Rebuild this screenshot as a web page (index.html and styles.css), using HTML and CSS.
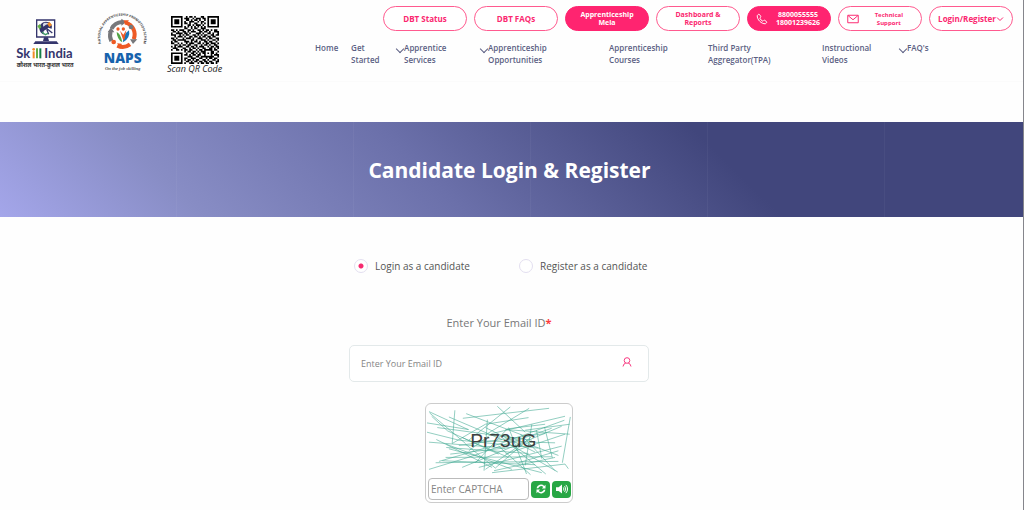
FILE: index.html
```html
<!DOCTYPE html>
<html lang="en">
<head>
<meta charset="utf-8">
<meta name="viewport" content="width=device-width, initial-scale=1">
<title>Candidate Login &amp; Register</title>
<link rel="stylesheet" href="styles.css">
</head>
<body>
<header class="header">
  <div class="logos">
    <svg class="logo-skill" viewBox="0 0 180 153" role="img" aria-label="Skill India">
      <path d="M62 6h54v51H62z" fill="none" stroke="#34356c" stroke-width="4"/>
      <path d="M84 58h12l3 11h-18z" fill="#34356c"/>
      <path d="M58 70h64l6 8H52z" fill="#34356c"/>
      <path d="M84 12a20 20 0 0 0-9 32l8 6q-4-12 6-15l8-6 10 3q3-8-2-14-8-9-21-6z" fill="#34356c"/>
      <path d="M84 14q-6 5-2 12l8-6q6 0 8-5z" fill="#d8dbe8"/>
      <path d="M64 24l8-6 4 10-6 6z" fill="#63ad45"/>
      <path d="M94 18l6-7 8 10-8 6z" fill="#f28c28"/>
      <path d="M91 31l18 14M92 34l6 15" stroke="#34356c" stroke-width="4"/>
      <path d="M78 42l10 8 8-4" stroke="#3d9a64" stroke-width="4" fill="none"/>
      <text class="skill-name" x="1" y="121">Sk</text>
      <path d="M50 100h6v21h-6z" fill="#f28c28"/><circle cx="53" cy="94" r="4" fill="#f28c28"/>
      <path d="M60 91h6v30h-6z" fill="#63ad45"/><path d="M70 91h6v30h-6z" fill="#16804a"/>
      <text class="skill-name" x="85" y="121">India</text>
      <text class="skill-tag" x="2" y="147">कौशल भारत-कुशल भारत</text>
    </svg>
    <svg class="logo-naps" viewBox="0 0 156 192" role="img" aria-label="National Apprenticeship Promotion Scheme">
      <defs><path id="ring" d="M15 110A66 66 0 1 1 142 110"/></defs>
      <text class="ring-text"><textPath href="#ring">NATIONAL APPRENTICESHIP PROMOTION SCHEME</textPath></text>
      <g fill="none" stroke-width="12">
        <path d="M47 65a37 37 0 0 1 31-20" stroke="#77787b"/>
        <path d="M89 47a37 37 0 0 1 24 50" stroke="#ee5a24"/>
        <path d="M44 74a37 37 0 0 0 2 28" stroke="#77787b"/>
        <path d="M64 116a37 37 0 0 0 38-4" stroke="#ee5a24"/>
      </g>
      <path d="M76 35l15 10-15 11zM102 97h22l-13 14zM35 76l10-15 10 15z" fill="#77787b"/>
      <path d="M77 110l-14-1 12 16zM83 40l16 0-12 14z" fill="#ee5a24"/>
      <circle cx="53" cy="105" r="7" fill="#ee5a24"/><circle cx="105" cy="60" r="7" fill="#77787b"/>
      <path d="M62 75q12 4 17 31-16-9-17-31z" fill="#52a445"/>
      <path d="M99 70q5 23-18 36-1-22 18-36z" fill="#1976b9"/>
      <path d="M72 71l10 12 9-14-5 26-4 5z" fill="#ee5a24"/>
      <circle cx="66" cy="66" r="5" fill="#ee5a24"/><circle cx="82" cy="66" r="5" fill="#ee5a24"/>
      <text class="naps-name" x="80" y="168">NAPS</text>
      <text class="naps-tag" x="80" y="189">On the job skilling</text>
    </svg>
    <figure class="qr">
      <svg class="qr-code" viewBox="0 0 29 29" role="img" aria-label="QR code"><path id="modules" d=""/></svg>
      <figcaption>Scan QR Code</figcaption>
    </figure>
  </div>
  <div class="menus">
    <div class="actions">
      <a class="pill" href="#">DBT Status</a>
      <a class="pill" href="#">DBT FAQs</a>
      <a class="pill small filled" href="#">Apprenticeship<br>Mela</a>
      <a class="pill small" href="#">Dashboard &amp;<br>Reports</a>
      <a class="pill small filled with-icon" href="#">
        <svg class="icon" viewBox="0 0 16 16"><path d="M3 2L1.700 3.500C1 8.500 7.500 15 12.500 14.300L14 13q.8-.8 0-1.500l-2.300-1.700q-.8-.5-1.500.2l-1 1Q6.300 9.700 5 6.800l1-1q.7-.7.2-1.500L4.600 2Q3.900 1.200 3 2z"/></svg>
        <span>8800055555<br>18001239626</span></a>
      <a class="pill tiny with-icon" href="#">
        <svg class="icon" viewBox="0 0 16 16"><path d="M1 3h14v10H1zM1.500 3.500L8 9l6.500-5.500"/></svg>
        <span>Technical<br>Support</span></a>
      <button class="pill" type="button">Login/Register<svg class="caret" viewBox="0 0 8 8"><path d="M1 2.500l3 3 3-3"/></svg></button>
    </div>
    <nav class="nav">
      <a href="#">Home</a>
      <a href="#">Get<br>Started</a>
      <a class="drop" href="#">Apprentice<br>Services</a>
      <a class="drop" href="#">Apprenticeship<br>Opportunities</a>
      <a href="#">Apprenticeship<br>Courses</a>
      <a href="#">Third Party<br>Aggregator(TPA)</a>
      <a href="#">Instructional<br>Videos</a>
      <a class="drop" href="#">FAQ's</a>
    </nav>
  </div>
</header>
<section class="banner"><h1>Candidate Login &amp; Register</h1></section>
<main class="main">
  <form class="form">
    <div class="choices">
      <label><input type="radio" name="mode" checked>Login as a candidate</label>
      <label><input type="radio" name="mode">Register as a candidate</label>
    </div>
    <label class="field-label" for="email">Enter Your Email ID<b>*</b></label>
    <div class="field">
      <input id="email" type="email" placeholder="Enter Your Email ID">
      <svg class="user" viewBox="0 0 10 10"><circle cx="5" cy="3.500" r="2.800"/><path d="M1 9.500Q1.500 6.500 3.800 6M9 9.500Q8.500 6.500 6.200 6"/></svg>
    </div>
    <div class="captcha">
      <svg class="captcha-image" viewBox="4 2 434 212" preserveAspectRatio="xMidYMin meet" role="img" aria-label="Captcha">
        <path class="scribble" d="M10 22L128 76M12 26L120 118M4 56L130 76M88 18L80 118M70 38L230 106M112 42L372 12M122 28L300 96M216 6L300 84M255 8L130 108M312 12L180 92M186 46L176 200M18 36L66 80L220 150M35 70L320 108M4 84L100 108L340 132M10 114L240 132M32 106L200 190M62 130L310 148M10 196L128 160L380 72M80 118L180 60L310 40M40 172L220 120L418 48M60 160L380 158M50 170L330 182M30 176L400 172M62 120L260 196M70 134L350 206M120 120L210 192L320 96M130 140L200 88L420 36M150 176L246 74L360 60M180 196L300 112L410 66M200 206L420 180M206 200L390 160M220 126L316 212M230 100L362 210M250 70L304 210M260 124L398 204M286 90L390 200M240 76L434 90M300 78L434 60M320 60L300 184M334 78L350 164M358 68L382 162M436 38L412 176M420 180L430 194M240 150L420 90M160 110L390 116M100 124L360 88M180 70L330 144M74 150L290 126M110 100L250 160M160 190L410 126M230 90L400 154M280 176L400 140M110 190L290 116"/>
        <text class="captcha-text" x="134" y="129">Pr73uG</text>
      </svg>
      <div class="captcha-row">
        <input type="text" placeholder="Enter CAPTCHA" aria-label="Enter CAPTCHA">
        <button type="button" aria-label="Refresh captcha"><svg viewBox="0 0 16 16"><path d="M2 7a6 6 0 0 1 10.300-3L14 2.300V7.200H9.200L11 5.400A4 4 0 0 0 4.300 7zM14 9a6 6 0 0 1-10.300 3L2 13.700V8.800H6.800L5 10.600A4 4 0 0 0 11.700 9z"/></svg></button>
        <button type="button" aria-label="Play captcha"><svg viewBox="0 0 16 16"><path d="M0 5.500h3.500L8 2v12l-4.500-3.500H0z"/><path class="wave" d="M9.800 6q1.700 2 0 4M11.500 4.200q3.200 3.800 0 7.600M13.200 2.500q4.500 5.500 0 11"/></svg></button>
      </div>
    </div>
  </form>
</main>
<script src="qr.js"></script>
</body>
</html>
```

FILE: styles.css
```css
* { box-sizing: border-box; }
html { height: 100%; }
body {
  margin: 0;
  min-height: 100%;
  border-right: 1px solid #85868c;
  background: #fefefe;
  font-family: "Open Sans", "Noto Sans", sans-serif;
  color: #555;
  overflow: hidden;
}
a { color: inherit; text-decoration: none; }
button, input { font-family: inherit; }

.header {
  display: flex;
  justify-content: space-between;
  height: 82px;
  padding: 6px 10px 0 16px;
  border-bottom: 1px solid #fbfbfb;
}
.logos { display: flex; align-items: flex-start; }
.logo-skill { width: 60px; height: 51px; margin-top: 12px; overflow: visible; }
.logo-naps { width: 52px; height: 64px; margin: 1px 0 0 20px; overflow: visible; }
.qr { margin: 10px 0 0 19px; text-align: center; }
.qr-code { display: block; width: 48px; height: 48px; margin: 0 auto; }
.qr figcaption { font-size: 9px; line-height: 10px; font-style: italic; white-space: nowrap; color: #222; }
.skill-name { font: 700 39px Lato, sans-serif; fill: #34356c; }
.skill-tag { font: 700 17px "Noto Sans", sans-serif; fill: #333; }
.ring-text { font: 700 10px "Open Sans", sans-serif; fill: #444; }
.naps-name { font: 800 41px "Open Sans", sans-serif; fill: #1763ad; text-anchor: middle; }
.naps-tag { font: italic 700 14px "Liberation Serif", serif; fill: #555; text-anchor: middle; }

.menus { width: 70%; }
.actions { display: flex; justify-content: flex-end; gap: 7px; }
.pill {
  display: flex;
  align-items: center;
  justify-content: center;
  width: 84px;
  height: 25px;
  padding: 0;
  border: 1px solid #ff5a8f;
  border-radius: 13px;
  background: #fff;
  color: #fb2870;
  font-size: 8px;
  font-weight: 700;
  line-height: 8px;
  text-align: center;
  white-space: nowrap;
}
.small { font-size: 7px; }
.tiny { font-size: 6px; }
.filled { background: #ff2470; border-color: #ff2470; color: #fff; }
.with-icon { justify-content: space-between; padding: 0 10px 0 8px; }
.tiny.with-icon { padding-right: 18px; }
.icon { width: 12px; height: 12px; fill: none; stroke: currentColor; stroke-width: 1.3; }
.caret { width: 8px; height: 8px; fill: none; stroke: currentColor; stroke-width: 1; }

.nav {
  display: grid;
  grid-template-columns: 36fr 53fr 84fr 121fr 99fr 114fr 85fr 106fr;
  margin-top: 11px;
  color: #5b5f83;
  font-size: 8px;
  font-weight: 600;
  line-height: 12px;
}
.nav a { position: relative; white-space: nowrap; }
.drop::before {
  content: "";
  position: absolute;
  left: -7px;
  top: 4px;
  width: 5px;
  height: 5px;
  border: solid #5b5f83;
  border-width: 0 1px 1px 0;
  transform: rotate(45deg);
}

.banner {
  display: flex;
  align-items: center;
  justify-content: center;
  height: 95px;
  margin-top: 40px;
  padding-right: 4px;
  background:
    repeating-linear-gradient(90deg, transparent 0 176px, rgba(255, 255, 255, .04) 176px 177px),
    linear-gradient(45deg, #a4a6ea 0%, #888dc5 18%, #6b70aa 42%, #41467c 70%);
}
.banner h1 { margin: 0; color: #fff; font-size: 21px; line-height: 30px; font-weight: 700; }

.main { padding: 42px 25px 0 0; }
.form { display: flex; flex-direction: column; align-items: center; width: 300px; margin: 0 auto; }
.choices { display: flex; gap: 49px; width: 100%; padding-left: 5px; }
.choices label { display: flex; align-items: center; gap: 7px; font-size: 10px; line-height: 14px; white-space: nowrap; }
.choices input {
  appearance: none;
  width: 14px;
  height: 14px;
  margin: 0;
  border: 1px solid #e3dff0;
  border-radius: 50%;
  background: #fff;
}
.choices input:checked { background: radial-gradient(circle, #f62a70 0 2px, #fff 3px); }
.field-label { margin-top: 42px; font-size: 11px; line-height: 16px; color: #777; }
.field-label b { color: #ff3b3b; }
.field { position: relative; width: 100%; margin-top: 14px; }
.field input {
  display: block;
  width: 100%;
  height: 37px;
  padding: 0 40px 0 11px;
  border: 1px solid #e3e9ea;
  border-radius: 5px;
  background: #fff;
  font-size: 9px;
}
.field input::placeholder, .captcha input::placeholder { color: #858585; }
.user { position: absolute; right: 17px; top: 12px; width: 10px; height: 10px; fill: none; stroke: #f83c82; stroke-width: 1; }
.captcha {
  width: 148px;
  margin-top: 21px;
  padding: 1px;
  border: 1px solid #ccc;
  border-radius: 6px;
  background: #fff;
}
.captcha-image { display: block; width: 100%; height: 72px; }
.scribble { fill: none; stroke: #3fa791; stroke-width: 2; opacity: .85; }
.captcha-text { font: 58px "Liberation Sans", sans-serif; fill: #3c3f40; }
.captcha-row { display: flex; align-items: center; gap: 2px; padding: 1px 0 1px 1px; }
.captcha input { flex: 1; min-width: 0; height: 22px; padding: 0 2px; border: 1px solid #bbb; border-radius: 4px; font-size: 10px; }
.captcha button { display: flex; align-items: center; justify-content: center; width: 19px; height: 17px; padding: 0; border: 0; border-radius: 4px; background: #28a745; }
.captcha button svg { width: 12px; height: 12px; fill: #fff; }
.captcha .wave { fill: none; stroke: #fff; stroke-width: 1.3; }
```

FILE: qr.js
```js
const rows = [
  "11111110010110100011001111111",
  "10000010111001011101101000001",
  "10111010011010110100101011101",
  "10111010100111001011001011101",
  "10111010110100110010101011101",
  "10000010001101011101001000001",
  "11111110101010101010101111111",
  "00000000110010110011100000000",
  "11010111001101001101011010110",
  "01101001101011100110110100111",
  "10011110110100011101001101001",
  "11100101011001101010110011011",
  "00101110100110110101101101100",
  "11010001011101001110010110011",
  "01101111100011010011101001101",
  "10110000111010110100110110010",
  "11001010010111001101011011101",
  "00110101101100110010110100110",
  "10101110011011010111001011011",
  "01110001100101101001100110101",
  "10011010110110010110111110110",
  "00000000101101101011100011001",
  "11111110010011010101101011010",
  "10000010110101101100100010111",
  "10111010001110011011111111001",
  "10111010110011100110010110110",
  "10111010101101011001101001101",
  "10000010011010110110110110011",
  "11111110100111001011011011010"
];
let d = "";
rows.forEach((row, y) => {
  [...row].forEach((cell, x) => {
    if (cell === "1") d += `M${x} ${y}h1v1h-1z`;
  });
});
document.getElementById("modules").setAttribute("d", d);
```
